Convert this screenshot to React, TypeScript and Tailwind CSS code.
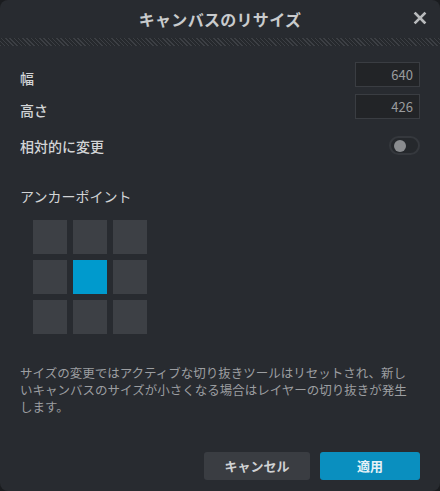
import React from "react";

const font = { fontFamily: '"Noto Sans CJK JP", "Noto Sans", sans-serif' };

export default function App() {
  const cells = [0, 1, 2, 3, 4, 5, 6, 7, 8];
  return (
    <div className="w-[440px] h-[491px] bg-[#1a1c1f]" style={font}>
      <div className="w-[440px] h-[491px] bg-[#282b30] rounded-[8px] flex flex-col overflow-hidden">
        <div className="h-[38px] relative flex items-center justify-center">
          <span className="text-[16px] font-bold text-[#c9cbcd] tracking-[0.3px]">キャンバスのリサイズ</span>
          <span className="absolute right-[12px] top-[10px] text-[#b8babc]">
            <svg width="16" height="16" viewBox="0 0 16 16">
              <path d="M3.5 3.5 L12.5 12.5 M12.5 3.5 L3.5 12.5" stroke="currentColor" strokeWidth="2.6" strokeLinecap="square" />
            </svg>
          </span>
        </div>
        <div className="h-[8px] bg-[repeating-linear-gradient(45deg,#3c3f44_0px,#3c3f44_1px,#26292d_1px,#26292d_3px)]" />
        <div className="flex flex-col px-[20px] pt-[16px]">
          <div className="flex items-center justify-between h-[25px]">
            <span className="text-[14px] font-medium text-[#d2d4d6] pt-[7px]">幅</span>
            <div className="w-[65px] h-[25px] bg-[#222427] border border-[#3a3d42] flex items-center justify-end pr-[6px] text-[13px] text-[#9a9c9e]">640</div>
          </div>
          <div className="flex items-center justify-between h-[25px] mt-[7px]">
            <span className="text-[14px] font-medium text-[#d2d4d6] pt-[7px]">高さ</span>
            <div className="w-[65px] h-[25px] bg-[#222427] border border-[#3a3d42] flex items-center justify-end pr-[6px] text-[13px] text-[#9a9c9e]">426</div>
          </div>
          <div className="flex items-center justify-between h-[19px] mt-[17px]">
            <span className="text-[14px] font-medium text-[#d2d4d6] pt-[1px]">相対的に変更</span>
            <div className="w-[31px] h-[19px] rounded-full border-2 border-[#35383d] bg-[#25282c] flex items-center pl-[3px]">
              <div className="w-[12px] h-[12px] rounded-full bg-[#8a8c8f]" />
            </div>
          </div>
          <div className="mt-[31px] text-[14px] text-[#d2d4d6] leading-[20px]">アンカーポイント</div>
          <div className="mt-[14px] ml-[13px] grid grid-cols-[34px_34px_34px] gap-[6px]">
            {cells.map((i) => (
              <div key={i} className={i === 4 ? "w-[34px] h-[34px] bg-[#009acd]" : "w-[34px] h-[34px] bg-[#3d4045]"} />
            ))}
          </div>
          <div className="mt-[30px] text-[12.5px] leading-[17px] text-[#9c9ea1] flex flex-col">
            <span className="whitespace-nowrap">サイズの変更ではアクティブな切り抜きツールはリセットされ、新し</span>
            <span className="whitespace-nowrap">いキャンバスのサイズが小さくなる場合はレイヤーの切り抜きが発生</span>
            <span className="whitespace-nowrap">します。</span>
          </div>
          <div className="mt-[37px] flex justify-end gap-[10px]">
            <button className="w-[106px] h-[28px] rounded-[3px] bg-[#3a3d42] text-[13px] font-bold text-[#d0d2d4]">キャンセル</button>
            <button className="w-[100px] h-[28px] rounded-[3px] bg-[#0a8fbf] text-[13px] font-bold text-[#e6f2f7]">適用</button>
          </div>
        </div>
      </div>
    </div>
  );
}
